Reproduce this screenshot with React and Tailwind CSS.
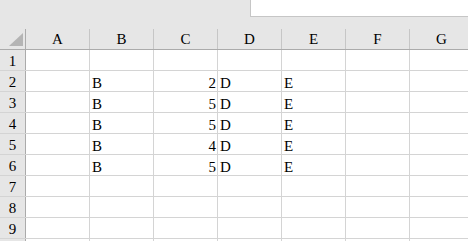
const cols = ['A', 'B', 'C', 'D', 'E', 'F', 'G'];

const data = {
  2: { B: 'B', C: '2', D: 'D', E: 'E' },
  3: { B: 'B', C: '5', D: 'D', E: 'E' },
  4: { B: 'B', C: '5', D: 'D', E: 'E' },
  5: { B: 'B', C: '4', D: 'D', E: 'E' },
  6: { B: 'B', C: '5', D: 'D', E: 'E' },
};

const rows = [1, 2, 3, 4, 5, 6, 7, 8, 9, 10];

export default function App() {
  return (
    <div
      className="w-[468px] h-[241px] overflow-hidden bg-white text-black"
      style={{ fontFamily: '"Liberation Serif", "Times New Roman", serif' }}
    >
      {/* formula bar area */}
      <div className="h-[29px] bg-[#e6e6e6] flex justify-end items-start">
        <div className="w-[218px] h-[17px] bg-white border-l border-b border-[#c6c6c6]"></div>
      </div>

      {/* column headers */}
      <div className="flex h-[21px] bg-[#e6e6e6] border-b border-[#ababab]">
        <div className="w-[26px] shrink-0 border-r border-[#ababab] relative">
          <svg className="absolute left-[9px] top-[4px]" width="14" height="13" viewBox="0 0 14 13">
            <polygon points="14,0 14,13 0,13" fill="#b4b4b4" />
          </svg>
        </div>
        {cols.map((c) => (
          <div
            key={c}
            className="w-[64px] shrink-0 border-r border-[#c6c6c6] flex items-end justify-center text-[15px] leading-[13px] pb-[3px]"
          >
            {c}
          </div>
        ))}
      </div>

      {/* rows */}
      {rows.map((r) => (
        <div key={r} className="flex h-[21px] border-b border-[#d4d4d4]">
          <div className="w-[26px] shrink-0 bg-[#e6e6e6] border-r border-[#ababab] flex items-end justify-center text-[15px] leading-[13px] pb-[2px]">
            {r < 10 ? r : ''}
          </div>
          {cols.map((c) => {
            const v = data[r] && data[r][c];
            const num = v && /^\d+$/.test(v);
            return (
              <div
                key={c}
                className={
                  'w-[64px] shrink-0 border-r border-[#d4d4d4] flex items-end text-[15px] leading-[13px] pb-px ' +
                  (num ? 'justify-end pr-px' : 'justify-start pl-[2px]')
                }
              >
                {v}
              </div>
            );
          })}
        </div>
      ))}
    </div>
  );
}
